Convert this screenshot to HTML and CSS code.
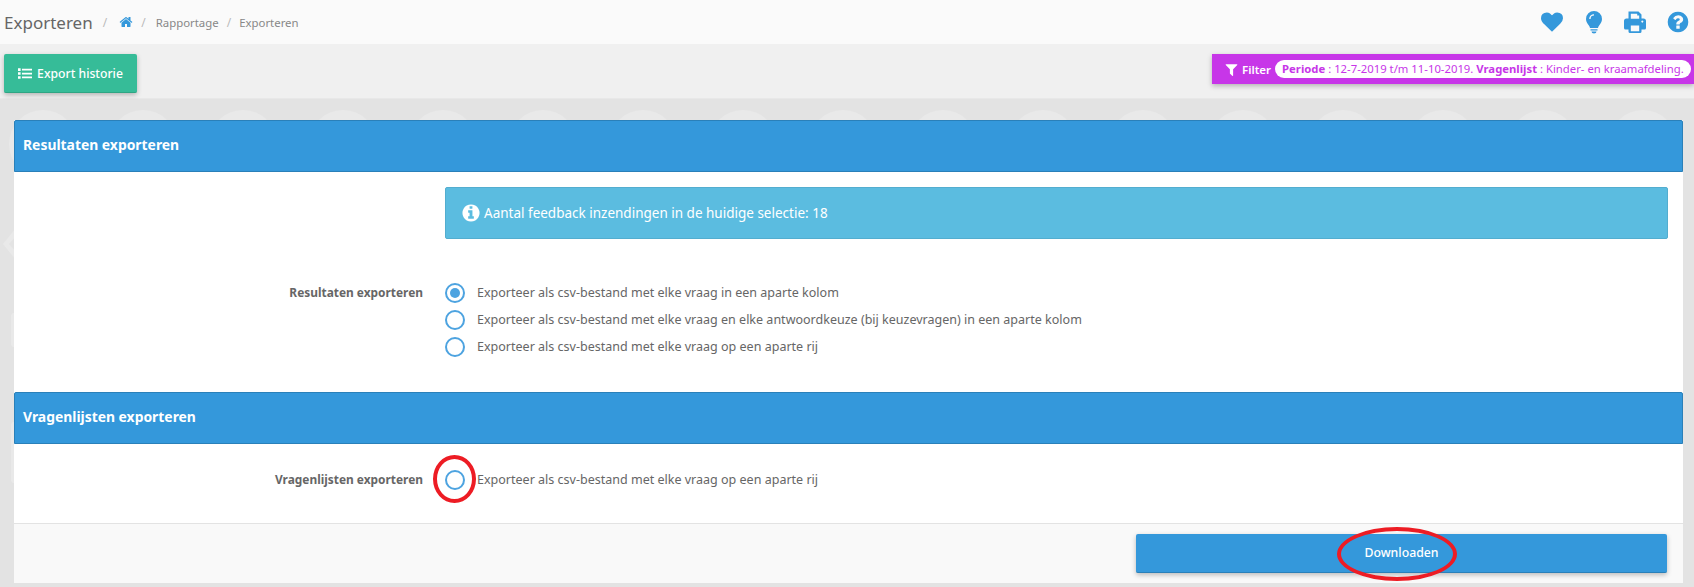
FILE: index.html
```html
<!DOCTYPE html>
<html>

<head>
  <meta charset="utf-8">
  <meta name="viewport" content="width=device-width">
  <title>Exporteren</title>
  <link rel="stylesheet" href="styles.css">
</head>

<body>
  <div class="topBar">
    <span class="pageTitle">Exporteren</span>
    <span class="crumbSep first">/</span>
    <svg class="homeIcon" viewBox="0 0 1792 1792"><path d="M1472 992v480q0 26-19 45t-45 19h-384v-384h-256v384h-384q-26 0-45-19t-19-45v-480q0-1 .5-3t.5-3l575-474 575 474q1 2 1 6zm223-69l-62 74q-8 9-21 11h-3q-13 0-21-7l-692-577-692 577q-12 8-24 7-13-2-21-11l-62-74q-8-10-7-23.5t11-21.5l719-599q32-26 76-26t76 26l244 204v-195q0-14 9-23t23-9h192q14 0 23 9t9 23v408l219 182q10 8 11 21.5t-7 23.5z"/></svg>
    <span class="crumbSep">/</span>
    <span class="crumb">Rapportage</span>
    <span class="crumbSep">/</span>
    <span class="crumb">Exporteren</span>

    <div class="topIcons">
      <svg class="topIcon heart" viewBox="0 0 1792 1792"><path d="M896 1664q-26 0-44-18l-624-602q-10-8-27.5-26t-55.5-65.5-68-97.5-53.5-121-23.5-138q0-220 127-344t351-124q62 0 126.5 21.5t120 58 95.5 68.5 76 68q36-36 76-68t95.5-68.5 120-58 126.5-21.5q224 0 351 124t127 344q0 221-229 450l-623 600q-18 18-44 18z"/></svg>
      <svg class="topIcon" viewBox="0 0 24 24"><path d="M12 1a8 8 0 0 0-8 8c0 3 1.500 4.500 2.700 6.200.8 1.100 1.200 2 1.300 2.800h8c.1-.8.5-1.700 1.300-2.800C18.500 13.500 20 12 20 9a8 8 0 0 0-8-8zM8.600 9H7.200a4.800 4.800 0 0 1 4.800-4.800v1.400A3.400 3.400 0 0 0 8.600 9zM8.500 19.200h7v1.300h-7zM9.500 21.400h5a2.500 2 0 0 1-5 0z"/></svg>
      <svg class="topIcon print" viewBox="0 0 24 24"><path fill-rule="evenodd" d="M5.500 1.500h10l3 3v4h2a2.500 2.500 0 0 1 2.500 2.500v7a1.500 1.500 0 0 1-1.500 1.500h-3v2a1.500 1.500 0 0 1-1.500 1.500H7A1.500 1.500 0 0 1 5.500 21.500v-2h-3A1.500 1.500 0 0 1 1 18v-7a2.500 2.500 0 0 1 2.500-2.500h2zM7.800 3.700v5h8.400V5.500h-2V3.700zM7.800 15.500v5.700h8.400v-5.700zM19.300 10.500a1 1 0 1 0 .01 0z"/></svg>
      <svg class="topIcon" viewBox="0 0 1792 1792"><path d="M1024 1376v-192q0-14-9-23t-23-9h-192q-14 0-23 9t-9 23v192q0 14 9 23t23 9h192q14 0 23-9t9-23zm256-672q0-88-55.5-163t-138.5-116-170-41q-243 0-371 213-15 24 8 42l132 100q7 6 19 6 16 0 25-12 53-68 86-92 34-24 86-24 48 0 85.5 26t37.5 59q0 38-20 61t-68 45q-63 28-115.5 86.5t-52.5 125.5v36q0 14 9 23t23 9h192q14 0 23-9t9-23q0-19 21.5-49.5t54.5-49.5q32-18 49-28.5t46-35 44.5-48 28-60.5 12.5-81zm384 192q0 209-103 385.5t-279.5 279.5-385.5 103-385.5-103-279.5-279.5-103-385.5 103-385.5 279.5-279.5 385.5-103 385.5 103 279.5 279.5 103 385.5z"/></svg>
    </div>
  </div>

  <div class="subBar">
    <a class="historyBtn">
      <svg class="listIcon" viewBox="0 0 16 12"><path d="M0 0h3v3H0zM0 4.500h3v3H0zM0 9h3v3H0zM4.500 .5H16v2H4.500zM4.500 5H16v2H4.500zM4.500 9.500H16v2H4.500z"/></svg>
      Export historie
    </a>
    <div class="filterBtn">
      <svg class="filterIcon" viewBox="0 0 1792 1792"><path d="M1595 295q17 41-14 70l-493 493v742q0 42-39 59-13 5-25 5-27 0-45-19l-256-256q-19-19-19-45v-486l-493-493q-31-29-14-70 17-39 59-39h1280q42 0 59 39z"/></svg>
      <span class="filterLabel">Filter</span>
      <span class="filterPill"><b>Periode</b> : 12-7-2019 t/m 11-10-2019. <b>Vragenlijst</b> : Kinder- en kraamafdeling.</span>
    </div>
  </div>

  <div class="content">
    <div class="watermark">
      <i></i><i></i><i></i><i></i><i></i><i></i><i></i><i></i>
      <i></i><i></i><i></i><i></i><i></i><i></i><i></i><i></i><i></i>
    </div>
    <svg class="sideChevron" viewBox="0 0 14 32"><path d="M14 0v8L7 16l7 8v8L1 16z"/></svg>
    <span class="sideBar one"></span>
    <span class="sideBar two"></span>

    <div class="panel">
      <div class="panelHead">Resultaten exporteren</div>
      <div class="panelBody first">
        <div class="alertRow">
          <div class="alertBox">
            <svg class="infoIcon" viewBox="0 0 1792 1792"><path d="M1152 1376v-160q0-14-9-23t-23-9h-96v-512q0-14-9-23t-23-9h-320q-14 0-23 9t-9 23v160q0 14 9 23t23 9h96v320h-96q-14 0-23 9t-9 23v160q0 14 9 23t23 9h448q14 0 23-9t9-23zm-128-896v-160q0-14-9-23t-23-9h-192q-14 0-23 9t-9 23v160q0 14 9 23t23 9h192q14 0 23-9t9-23zm640 416q0 209-103 385.5t-279.5 279.5-385.5 103-385.5-103-279.5-279.5-103-385.5 103-385.5 279.5-279.5 385.5-103 385.5 103 279.5 279.5 103 385.5z"/></svg>
            Aantal feedback inzendingen in de huidige selectie: 18
          </div>
        </div>

        <div class="formRow">
          <div class="formLabel">Resultaten exporteren</div>
          <div class="radioList">
            <div class="radioRow"><span class="radio checked"></span>Exporteer als csv-bestand met elke vraag in een aparte kolom</div>
            <div class="radioRow"><span class="radio"></span>Exporteer als csv-bestand met elke vraag en elke antwoordkeuze (bij keuzevragen) in een aparte kolom</div>
            <div class="radioRow"><span class="radio"></span>Exporteer als csv-bestand met elke vraag op een aparte rij</div>
          </div>
        </div>
      </div>

      <div class="panelHead">Vragenlijsten exporteren</div>
      <div class="panelBody second">
        <div class="formRow">
          <div class="formLabel">Vragenlijsten exporteren</div>
          <div class="radioList">
            <div class="radioRow"><span class="radio thin"><span class="markRadio"></span></span>Exporteer als csv-bestand met elke vraag op een aparte rij</div>
          </div>
        </div>
      </div>

      <div class="panelFoot">
        <a class="downloadBtn">Downloaden<span class="markDownload"></span></a>
      </div>
    </div>
  </div>
</body>
</html>
```

FILE: styles.css
```css
html {
  height: 100%;
  background-color: #e3e3e3;
}

body {
  margin: 0;
  padding: 0;
  height: 587px;
  overflow: hidden;
  font-family: "Noto Sans", Arial, sans-serif;
  font-size: 12px;
  color: #666;
}

svg {
  fill: currentColor;
  display: block;
  flex-shrink: 0;
}

.topBar {
  height: 44px;
  box-sizing: border-box;
  background-color: #fafafa;
  display: flex;
  align-items: center;
  padding: 0 4px;
}

.pageTitle {
  font-size: 17px;
  color: #666;
}

.crumbSep {
  color: #bbb;
  margin: 0 8px;
}

.crumbSep.first {
  margin: 0 12px 0 10px;
}

.crumb {
  color: #888;
  font-size: 11.400px;
}

.crumb:nth-of-type(4) {
  margin-left: 2px;
}

.homeIcon {
  width: 14px;
  height: 14px;
  color: #3498db;
}

.topIcons {
  margin-left: auto;
  display: flex;
  align-items: center;
  gap: 18px;
  color: #3498db;
}

.topIcon {
  width: 24px;
  height: 24px;
}

.topIcon.heart {
  width: 22px;
  height: 22px;
  margin-right: 1px;
}

.topIcon.print {
  margin: 0 1px 0 -1px;
}

.subBar {
  height: 55px;
  box-sizing: border-box;
  background-color: #f0f0f0;
  border-bottom: 1px solid #e8e8e8;
  display: flex;
  justify-content: space-between;
  align-items: flex-start;
  padding: 10px 0 0 4px;
}

.historyBtn {
  height: 39px;
  width: 133px;
  box-sizing: border-box;
  background-color: #36bc98;
  border-bottom: 1px solid #2ea583;
  border-radius: 2px;
  box-shadow: 0 2px 5px rgba(0, 0, 0, 0.25);
  color: #fff;
  font-size: 12.200px;
  font-weight: 500;
  display: flex;
  align-items: center;
  justify-content: center;
  gap: 5px;
}

.listIcon {
  width: 14px;
  height: 11px;
}

.filterBtn {
  height: 30px;
  width: 482px;
  box-sizing: border-box;
  background-color: #c736e8;
  box-shadow: 0 2px 5px rgba(0, 0, 0, 0.25);
  color: #fff;
  display: flex;
  align-items: center;
  padding-left: 12px;
  gap: 3px;
}

.filterIcon {
  width: 15px;
  height: 15px;
}

.filterLabel {
  font-size: 11.500px;
  font-weight: 600;
}

.filterPill {
  background-color: #fff;
  color: #c736e8;
  border-radius: 9px;
  height: 18px;
  line-height: 18px;
  padding: 0 7px;
  margin-left: 1px;
  font-size: 11.300px;
  white-space: nowrap;
}

.content {
  position: relative;
  padding: 21px 11px 0 14px;
  height: 488px;
  box-sizing: border-box;
}

/* faint background shapes behind the panel */
.watermark {
  position: absolute;
  left: 9px;
  top: 11px;
  display: flex;
  gap: 32px;
}

.watermark i {
  width: 68px;
  height: 68px;
  border-radius: 50%;
  background-color: #e9e9e9;
}

.sideChevron {
  position: absolute;
  left: 2px;
  top: 129px;
  width: 14px;
  height: 32px;
  color: #e9e9e9;
}

.sideBar {
  position: absolute;
  left: 11px;
  width: 6px;
  border-radius: 3px;
  background-color: #e9e9e9;
}

.sideBar.one {
  top: 214px;
  height: 34px;
}

.sideBar.two {
  top: 323px;
  height: 61px;
}

.panel {
  position: relative;
  background-color: #fff;
}

.panelHead {
  height: 52px;
  box-sizing: border-box;
  background-color: #3498db;
  border: 1px solid #2a80b9;
  border-radius: 2px 2px 0 0;
  color: #fff;
  font-size: 13.900px;
  font-weight: 700;
  display: flex;
  align-items: center;
  padding: 0 0 4px 8px;
}

.panelBody.first {
  height: 220px;
  padding-top: 15px;
  box-sizing: border-box;
}

.panelBody.second {
  height: 79px;
  padding-top: 22px;
  box-sizing: border-box;
}

.alertRow {
  padding: 0 15px 0 431px;
}

.alertBox {
  height: 52px;
  box-sizing: border-box;
  background-color: #5bbce0;
  border: 1px solid #53adcf;
  border-radius: 2px;
  color: #fff;
  font-size: 13.500px;
  display: flex;
  align-items: center;
  gap: 3px;
  padding: 0 0 1px 15px;
}

.infoIcon {
  width: 20px;
  height: 20px;
}

.formRow {
  display: flex;
  margin-top: 40px;
}

.second .formRow {
  margin-top: 0;
}

.formLabel {
  width: 409px;
  text-align: right;
  font-size: 11.900px;
  font-weight: 700;
  line-height: 27px;
  color: #666;
}

.radioList {
  margin-left: 22px;
  font-size: 12.520px;
}

.radioRow {
  height: 27px;
  display: flex;
  align-items: center;
  gap: 12px;
  color: #666;
}

.radio {
  position: relative;
  width: 20px;
  height: 20px;
  box-sizing: border-box;
  border: 2px solid #4da3e0;
  border-radius: 50%;
  display: block;
}

.radio.checked::after {
  content: "";
  position: absolute;
  left: 3px;
  top: 3px;
  width: 10px;
  height: 10px;
  border-radius: 50%;
  background-color: #4da3e0;
}

.markRadio {
  position: absolute;
  left: -14px;
  top: -17px;
  width: 43px;
  height: 48px;
  box-sizing: border-box;
  border: 4px solid #ed1c24;
  border-radius: 50%;
}

.panelFoot {
  height: 60px;
  box-sizing: border-box;
  background-color: #f9f9f9;
  border-top: 1px solid #e3e3e3;
  padding: 10px 16px 0 0;
  display: flex;
  justify-content: flex-end;
}

.downloadBtn {
  position: relative;
  width: 531px;
  height: 39px;
  box-sizing: border-box;
  background-color: #3498db;
  border-bottom: 1px solid #2a80b9;
  border-radius: 2px;
  box-shadow: 0 2px 5px rgba(0, 0, 0, 0.25);
  color: #fff;
  font-size: 12.300px;
  font-weight: 500;
  display: flex;
  align-items: center;
  justify-content: center;
  padding-bottom: 1px;
}

.markDownload {
  position: absolute;
  left: 201px;
  top: -7px;
  width: 120px;
  height: 54px;
  box-sizing: border-box;
  border: 4px solid #ed1c24;
  border-radius: 50%;
}
```
